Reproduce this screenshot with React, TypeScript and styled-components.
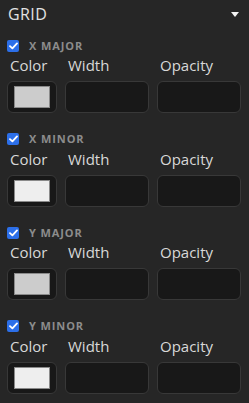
import * as React from "react";
import styled, { createGlobalStyle } from "styled-components";

const GlobalStyle = createGlobalStyle`
    html, body {
        margin: 0;
        padding: 0;
        background: #262626;
    }
    body {
        font-family: "Open Sans", "Noto Sans", sans-serif;
    }
`;

const Panel = styled.div`
    width: 249px;
    height: 403px;
    box-sizing: border-box;
    padding: 4px 8px 0 7px;
    background: #262626;
    overflow: hidden;
`;

const Header = styled.div`
    display: flex;
    align-items: center;
    justify-content: space-between;
    height: 20px;
    padding-left: 1px;
`;

const Title = styled.div`
    color: #e2e2e2;
    font-size: 16px;
    line-height: 20px;
    letter-spacing: 0.4px;
`;

const Caret = styled.div`
    width: 0;
    height: 0;
    margin-right: 2px;
    margin-top: 1px;
    border-left: 4px solid transparent;
    border-right: 4px solid transparent;
    border-top: 5px solid #f4f4f4;
`;

const Sections = styled.div`
    display: flex;
    flex-direction: column;
    gap: 20px;
    margin-top: 15.5px;
`;

const CheckRow = styled.div`
    display: flex;
    align-items: center;
    height: 12px;
    gap: 10px;
`;

const CheckBox = styled.span`
    display: flex;
    align-items: center;
    justify-content: center;
    width: 12px;
    height: 12px;
    border-radius: 2px;
    background: #2c6fe9;
`;

const CheckLabel = styled.span`
    color: #8c8c8c;
    font-size: 11px;
    line-height: 12px;
    font-weight: 700;
    letter-spacing: 0.9px;
`;

const Fields = styled.div`
    display: grid;
    grid-template-columns: 50px 1fr 1fr;
    column-gap: 8px;
    row-gap: 6px;
    margin-top: 4.5px;
`;

const FieldLabel = styled.div`
    color: #d8d8d8;
    font-size: 15px;
    line-height: 19px;
    padding-left: 3px;
    white-space: nowrap;
`;

const Box = styled.div`
    height: 32px;
    box-sizing: border-box;
    border: 1px solid #383838;
    border-radius: 6px;
    background: #181818;
    display: flex;
    align-items: center;
    justify-content: center;
`;

const Swatch = styled.div<{ $color: string }>`
    width: 36px;
    height: 22px;
    box-sizing: border-box;
    border: 1px solid #8a8a8a;
    background: ${(p) => p.$color};
`;

const sections = [
    { name: "X MAJOR", color: "#cccccc" },
    { name: "X MINOR", color: "#eeeeee" },
    { name: "Y MAJOR", color: "#cccccc" },
    { name: "Y MINOR", color: "#eeeeee" },
];

const Check = () => (
    <CheckBox>
        <svg width="9" height="8" viewBox="0 0 9 8">
            <path
                d="M1 4.2 L3.4 6.4 L8 1.4"
                fill="none"
                stroke="#ffffff"
                strokeWidth="1.8"
                strokeLinecap="round"
                strokeLinejoin="round"
            />
        </svg>
    </CheckBox>
);

export default function App() {
    return (
        <Panel>
            <GlobalStyle />
            <Header>
                <Title>GRID</Title>
                <Caret />
            </Header>
            <Sections>
                {sections.map((s) => (
                    <div key={s.name}>
                        <CheckRow>
                            <Check />
                            <CheckLabel>{s.name}</CheckLabel>
                        </CheckRow>
                        <Fields>
                            <FieldLabel>Color</FieldLabel>
                            <FieldLabel>Width</FieldLabel>
                            <FieldLabel>Opacity</FieldLabel>
                            <Box>
                                <Swatch $color={s.color} />
                            </Box>
                            <Box />
                            <Box />
                        </Fields>
                    </div>
                ))}
            </Sections>
        </Panel>
    );
}
